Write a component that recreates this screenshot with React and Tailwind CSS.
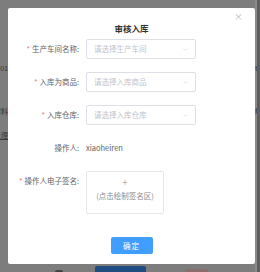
import { ChevronDown } from "lucide-react";

const fields = [
  { label: "生产车间名称:", placeholder: "请选择生产车间" },
  { label: "入库为商品:", placeholder: "请选择入库商品" },
  { label: "入库仓库:", placeholder: "请选择入库仓库" },
];

function Label({ required, children }) {
  return (
    <div className="w-[71px] shrink-0 flex justify-end items-center h-5 whitespace-nowrap text-[7.5px] text-[#606266]">
      {required && <span className="text-[#f56c6c] mr-[2px]">*</span>}
      {children}
    </div>
  );
}

function App() {
  return (
    <div className="relative w-[260px] h-[272px] overflow-hidden bg-[#7d7d7d] font-['Noto_Sans_CJK_SC','Noto_Sans',sans-serif]">
      {/* Page behind the overlay */}
      <div className="flex h-full">
        <div className="w-[8px] shrink-0 flex flex-col items-end text-[7px] text-[#333]">
          <span className="mt-[63px] whitespace-nowrap">2021-01</span>
          <span className="mt-[32px] whitespace-nowrap">原材料</span>
          <span className="mt-[14px] whitespace-nowrap underline text-[#3a3a3a]">处理</span>
        </div>
        <div className="flex-1 flex flex-col justify-end">
          <div className="flex items-end h-[8px] pl-[47px]">
            <div className="w-[8px] h-[2px] bg-[#444] rounded-t-[2px]"></div>
            <div className="ml-[32px] w-[51px] h-[6px] bg-[#1f4d7f] rounded-t-[2px]"></div>
            <div className="ml-[40px] w-[22px] h-[3px] bg-[#8a6e6e] rounded-t-[2px]"></div>
          </div>
        </div>
        <div className="w-[5px] shrink-0 flex">
          <div className="w-[2px] bg-[#8a8a8a] flex flex-col text-[7px] text-[#333]">
            <span className="mt-[63px]">t</span>
            <span className="mt-[32px]">f</span>
          </div>
          <div className="flex-1 bg-[#5e5e5e]"></div>
        </div>
      </div>

      {/* Dialog */}
      <div className="absolute left-[8px] top-[8px] w-[247px] h-[256px] bg-white rounded-[2px] flex flex-col pt-[14px]">
        <button className="absolute right-[12px] top-[4px] text-[9px] leading-none text-[#b4b7bd]">
          ×
        </button>

        <h2 className="text-center text-[8.5px] leading-[12px] font-bold text-[#303133]">
          审核入库
        </h2>

        <div className="mt-[5px] flex flex-col gap-[13px]">
          {fields.map((f) => (
            <div key={f.label} className="flex gap-[7px]">
              <Label required>{f.label}</Label>
              <div className="w-[110px] h-5 border border-[#dcdfe6] rounded-[2px] flex items-center justify-between pl-[7px] pr-[6px]">
                <span className="text-[7.5px] text-[#c0c4cc]">{f.placeholder}</span>
                <ChevronDown size={7} className="text-[#c0c4cc]" strokeWidth={1.5} />
              </div>
            </div>
          ))}

          <div className="flex gap-[7px]">
            <Label>操作人:</Label>
            <div className="h-5 flex items-center text-[7.5px] text-[#606266]">
              xiaoheiren
            </div>
          </div>

          <div className="flex gap-[7px]">
            <Label required>操作人电子签名:</Label>
            <div className="w-[78px] h-[43px] border border-[#e4e7ed] rounded-[2px] flex flex-col items-center pt-[4px]">
              <span className="text-[10px] leading-[12px] font-light text-[#909399]">+</span>
              <span className="mt-[3px] text-[7.5px] leading-[10px] text-[#8c8c8c]">
                (点击绘制签名区)
              </span>
            </div>
          </div>
        </div>

        <div className="mt-[23px] flex justify-center">
          <button className="w-[42px] h-[17px] bg-[#409eff] rounded-[2px] text-white text-[7.5px] tracking-[1px]">
            确定
          </button>
        </div>
      </div>
    </div>
  );
}

export default App;
